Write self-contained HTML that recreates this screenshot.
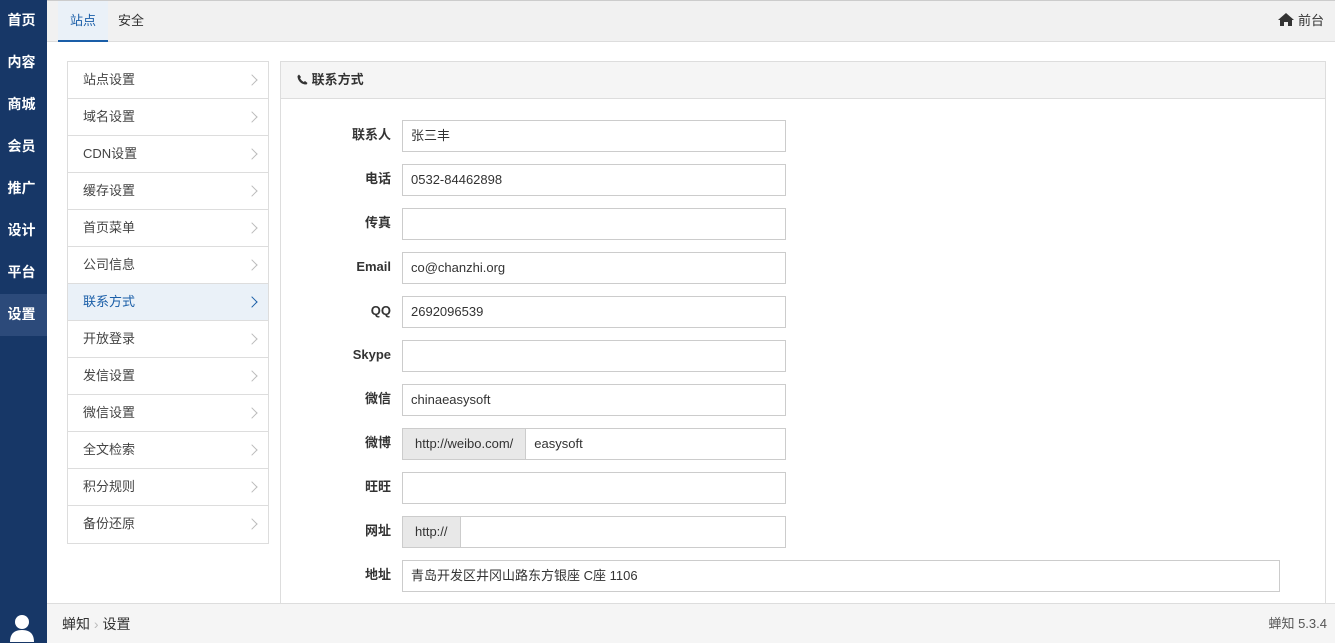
<!DOCTYPE html><html><head><meta charset="utf-8"><style>
*{box-sizing:border-box;margin:0;padding:0}
body{width:1335px;height:643px;overflow:hidden;font-family:"Liberation Sans","Noto Sans CJK SC",sans-serif;font-size:13px;color:#333;background:#fff;position:relative}
.side{position:absolute;left:0;top:0;width:47px;height:643px;background:#173767}
.side div{height:42px;line-height:40px;color:#fff;font-size:14px;font-weight:bold;text-align:center;padding-right:4px}
.side .act{background:#2c4a7a}
.top{position:absolute;left:47px;top:0;right:0;height:42px;background:#f1f1f1;border-bottom:1px solid #ddd;border-top:1px solid #ccc}
.tab{position:absolute;top:0;height:41px;line-height:40px;font-size:13px;padding:0 12px}
.tab.a{left:11px;color:#1a5ea8;background:#eaf1f8;border-bottom:2px solid #1a5ea8}
.menu{position:absolute;left:67px;top:61px;width:202px;border:1px solid #ddd}
.menu div{height:37px;line-height:36px;border-bottom:1px solid #ddd;padding-left:15px;color:#444;position:relative}
.menu div:last-child{border-bottom:0}
.menu div:after{content:"";position:absolute;right:12px;top:14px;width:7px;height:7px;border-right:1.5px solid #bbb;border-top:1.5px solid #bbb;transform:rotate(45deg)}
.menu .a{background:#eaf1f8;color:#1a5ea8}
.menu .a:after{border-color:#1a5ea8}
.panel{position:absolute;left:280px;top:61px;width:1046px;height:560px;border:1px solid #ddd}
.ph{height:37px;line-height:36px;background:#f5f5f5;border-bottom:1px solid #ddd;padding-left:16px;font-weight:bold}
.row{position:absolute;left:0;height:32px}
.lbl{position:absolute;left:0;width:110px;text-align:right;line-height:30px;font-weight:bold;color:#333}
.in{position:absolute;left:121px;width:384px;height:32px;border:1px solid #ccc;line-height:30px;padding-left:8px;display:flex}
.ad{background:#e8e8e8;border-right:1px solid #ccc;padding:0 12px 0 4px;margin-left:-8px;padding-left:12px}
.foot{position:absolute;left:47px;top:603px;right:0;height:40px;background:#f5f5f5;border-top:1px solid #ddd;line-height:40px}
</style></head><body>
<div class="side"><div>首页</div><div>内容</div><div>商城</div><div>会员</div><div>推广</div><div>设计</div><div>平台</div><div class="act">设置</div>
<svg style="position:absolute;left:10px;top:614px" width="24" height="28" viewBox="0 0 24 28"><circle cx="12" cy="8" r="7" fill="#fff"/><path d="M0 28 Q0 16 12 16 Q24 16 24 28Z" fill="#fff"/></svg></div>
<div class="top"><div class="tab a">站点</div><div class="tab" style="left:59px">安全</div>
<div style="position:absolute;right:11px;top:0;line-height:40px">
<svg width="16" height="13" viewBox="0 0 16 13" style="vertical-align:-1px"><path d="M8 0L0 7h2v6h4V9h4v4h4V7h2z" fill="#333"/></svg> 前台</div></div>
<div class="menu"><div>站点设置</div><div>域名设置</div><div>CDN设置</div><div>缓存设置</div><div>首页菜单</div><div>公司信息</div><div class="a">联系方式</div><div>开放登录</div><div>发信设置</div><div>微信设置</div><div>全文检索</div><div>积分规则</div><div>备份还原</div></div>
<div class="panel"><div class="ph"><svg width="11" height="11" viewBox="0 0 11 11" style="vertical-align:-1px"><path d="M2 0.5L4 3 3 4.3Q4.5 6.8 6.7 8L8 7l2.5 2-1 1.5Q5 10.5 2.5 7.5 0.5 5 0.5 2z" fill="#333"/></svg> 联系方式</div>
<div class="row" style="top:58px"><div class="lbl">联系人</div><div class="in">张三丰</div></div>
<div class="row" style="top:102px"><div class="lbl">电话</div><div class="in">0532-84462898</div></div>
<div class="row" style="top:146px"><div class="lbl">传真</div><div class="in"></div></div>
<div class="row" style="top:190px"><div class="lbl">Email</div><div class="in">co@chanzhi.org</div></div>
<div class="row" style="top:234px"><div class="lbl">QQ</div><div class="in">2692096539</div></div>
<div class="row" style="top:278px"><div class="lbl">Skype</div><div class="in"></div></div>
<div class="row" style="top:322px"><div class="lbl">微信</div><div class="in">chinaeasysoft</div></div>
<div class="row" style="top:366px"><div class="lbl">微博</div><div class="in"><span class="ad">http://weibo.com/</span><span style="padding-left:8px">easysoft</span></div></div>
<div class="row" style="top:410px"><div class="lbl">旺旺</div><div class="in"></div></div>
<div class="row" style="top:454px"><div class="lbl">网址</div><div class="in"><span class="ad">http://</span></div></div>
<div class="row" style="top:498px"><div class="lbl">地址</div><div class="in" style="width:878px">青岛开发区井冈山路东方银座 C座 1106</div></div>
</div>
<div class="foot"><span style="position:absolute;left:15px;font-size:14px">蝉知 <span style="color:#bbb">›</span> 设置</span><span style="position:absolute;right:8px;color:#555">蝉知 5.3.4</span></div>
</body></html>
